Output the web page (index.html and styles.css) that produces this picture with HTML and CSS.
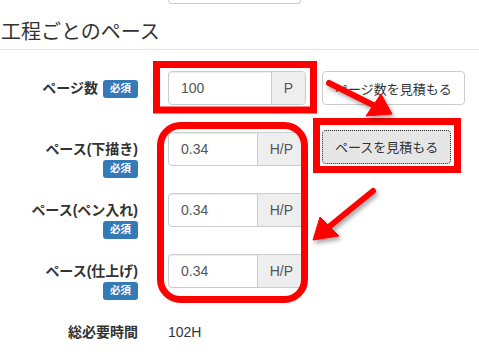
FILE: index.html
```html
<!DOCTYPE html>
<html lang="ja">
<head>
  <meta charset="UTF-8" />
  <meta name="viewport" content="width=device-width, initial-scale=1.0">
  <title>工程ごとのペース</title>
  <link rel="stylesheet" href="styles.css">
</head>
<body>
  <!-- bottom of the field from the previous section -->
  <div class="prev-field"></div>

  <h2 class="section-title">工程ごとのペース</h2>

  <form class="pace-form">
    <!-- Page count -->
    <div class="form-row">
      <label class="row-label inline">ページ数 <span class="badge">必須</span></label>
      <div class="input-group">
        <input type="text" value="100">
        <span class="addon">P</span>
      </div>
      <button type="button" class="btn">ページ数を見積もる</button>
    </div>

    <!-- Pace: draft -->
    <div class="form-row">
      <label class="row-label"><span>ペース(下描き)</span><span class="badge">必須</span></label>
      <div class="input-group">
        <input type="text" value="0.34">
        <span class="addon">H/P</span>
      </div>
      <button type="button" class="btn focused">ペースを見積もる</button>
    </div>

    <!-- Pace: inking -->
    <div class="form-row">
      <label class="row-label"><span>ペース(ペン入れ)</span><span class="badge">必須</span></label>
      <div class="input-group">
        <input type="text" value="0.34">
        <span class="addon">H/P</span>
      </div>
    </div>

    <!-- Pace: finishing -->
    <div class="form-row">
      <label class="row-label"><span>ペース(仕上げ)</span><span class="badge">必須</span></label>
      <div class="input-group">
        <input type="text" value="0.34">
        <span class="addon">H/P</span>
      </div>
    </div>

    <!-- Total -->
    <div class="form-row">
      <label class="row-label">総必要時間</label>
      <p class="static-value">102H</p>
    </div>
  </form>

  <!-- red annotations drawn over the screenshot -->
  <svg class="annotations" width="479" height="358" viewBox="0 0 479 358">
    <defs>
      <filter id="shadow" x="-20%" y="-20%" width="140%" height="140%">
        <feDropShadow dx="2" dy="3" stdDeviation="2" flood-color="#000" flood-opacity="0.35"/>
      </filter>
    </defs>
    <rect x="156.5" y="64.5" width="157" height="45.5" fill="none" stroke="#ff0000" stroke-width="7"/>
    <rect x="316.5" y="121.5" width="141" height="48" fill="none" stroke="#ff0000" stroke-width="7"/>
    <rect x="160.5" y="125.5" width="144" height="174" rx="20" fill="none" stroke="#ff0000" stroke-width="7"/>
    <g filter="url(#shadow)" fill="#ff0000" stroke="#ff0000">
      <line x1="329" y1="83" x2="373" y2="105" stroke-width="6" stroke-linecap="round"/>
      <polygon points="392,114 366,116 381,94" stroke-width="1" stroke-linejoin="round"/>
    </g>
    <g filter="url(#shadow)" fill="#ff0000" stroke="#ff0000">
      <line x1="373" y1="191" x2="330" y2="226" stroke-width="6" stroke-linecap="round"/>
      <polygon points="313,240 320,217 339,236" stroke-width="1" stroke-linejoin="round"/>
    </g>
  </svg>
</body>
</html>
```

FILE: styles.css
```css
body {
  font-family: "Liberation Sans", "Noto Sans CJK JP", sans-serif;
  font-size: 14px;
  line-height: 20px;
  margin: 0;
  background: #fff;
  color: #333;
  position: relative;
  overflow: hidden;
}
.prev-field {
  width: 133px;
  height: 4px;
  margin-left: 168px;
  border: 1px solid #ccc;
  border-top: none;
  border-radius: 0 0 4px 4px;
  box-sizing: border-box;
}
.section-title {
  margin: 14px 0 0;
  padding: 0 0 3px 1px;
  font-size: 20px;
  line-height: 28px;
  font-weight: normal;
  border-bottom: 1px solid #e5e5e5;
}
.pace-form {
  margin-top: 21px;
}
.form-row {
  display: flex;
  align-items: flex-start;
  min-height: 45.5px;
  margin-bottom: 15px;
}
.row-label {
  width: 138px;
  margin-right: 30px;
  padding-top: 7px;
  font-weight: bold;
  display: flex;
  flex-direction: column;
  align-items: flex-end;
  text-align: right;
}
.row-label.inline {
  flex-direction: row;
  justify-content: flex-end;
  align-items: center;
  gap: 5px;
}
.badge {
  display: inline-block;
  background: #337ab7;
  color: #fff;
  font-size: 10.5px;
  line-height: 13px;
  font-weight: bold;
  padding: 2px 7px 3px;
  border-radius: 3px;
}
.row-label .badge {
  margin-top: 1px;
}
.input-group {
  display: flex;
  width: 138px;
  height: 34px;
  border: 1px solid #ccc;
  border-radius: 4px;
  box-sizing: border-box;
  overflow: hidden;
  box-shadow: inset 0 1px 1px rgba(0,0,0,0.075);
}
.input-group input {
  flex: 1;
  min-width: 0;
  border: none;
  padding: 6px 12px;
  font: inherit;
  color: #555;
  background: transparent;
  outline: none;
}
.addon {
  padding: 6px 12px;
  background: #eee;
  border-left: 1px solid #ccc;
  color: #555;
}
.btn {
  margin-left: 16px;
  height: 34px;
  padding: 6px 12px;
  font-family: "Liberation Sans", "Noto Sans CJK JP", sans-serif;
  font-size: 13px;
  color: #333;
  background: #fff;
  border: 1px solid #ccc;
  border-radius: 4px;
}
.btn.focused {
  margin-top: -2px;
  background: #e6e6e6;
  border: 1px dotted #222;
}
.static-value {
  margin: 0;
  padding-top: 7px;
}
.annotations {
  position: absolute;
  left: 0;
  top: 0;
  pointer-events: none;
}
```
